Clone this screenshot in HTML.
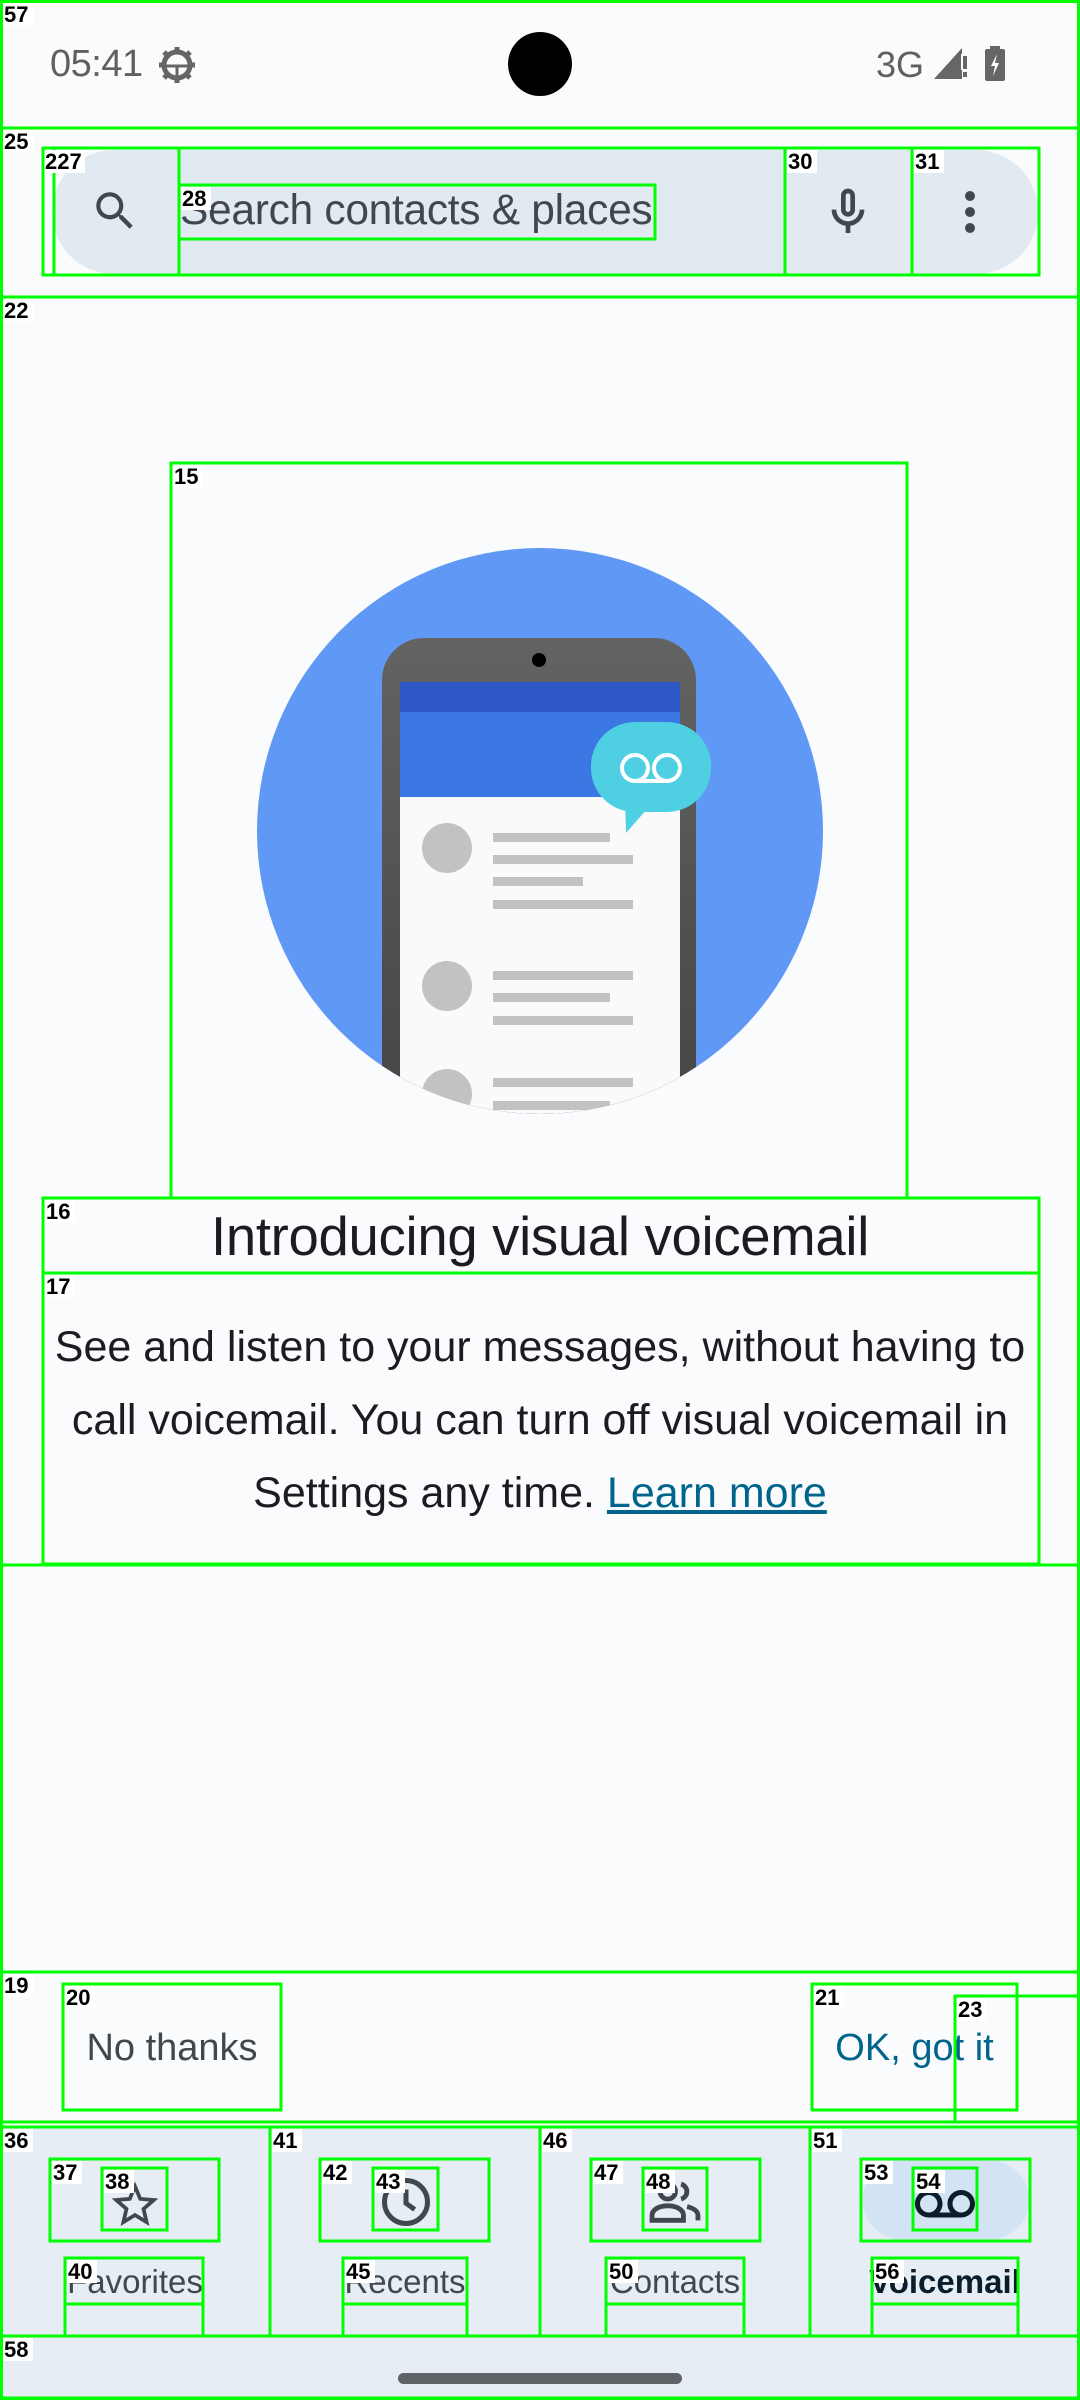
<!DOCTYPE html>
<html><head><meta charset="utf-8">
<style>
*{margin:0;padding:0;box-sizing:border-box}
html,body{width:1080px;height:2400px;overflow:hidden;background:#fafbfd;font-family:"Liberation Sans",sans-serif}
.a{position:absolute}
.t{white-space:nowrap}
</style></head><body>
<!-- status bar -->
<div class="a t" style="left:50px;top:43px;font-size:38px;color:#606060;letter-spacing:-0.5px">05:41</div>
<svg class="a" style="left:156px;top:45px" width="42" height="40" viewBox="0 0 42 40">
<circle cx="21" cy="20" r="13" fill="none" stroke="#666" stroke-width="5"/>
<g stroke="#666" stroke-width="5"><line x1="21" y1="2" x2="21" y2="8"/><line x1="21" y1="32" x2="21" y2="38"/><line x1="3" y1="20" x2="9" y2="20"/><line x1="33" y1="20" x2="39" y2="20"/><line x1="8" y1="7" x2="12" y2="11"/><line x1="30" y1="29" x2="34" y2="33"/><line x1="8" y1="33" x2="12" y2="29"/><line x1="30" y1="11" x2="34" y2="7"/></g>
<line x1="10" y1="21" x2="32" y2="21" stroke="#666" stroke-width="3"/><line x1="21" y1="21" x2="21" y2="32" stroke="#666" stroke-width="3"/>
</svg>
<div class="a" style="left:508px;top:32px;width:64px;height:64px;border-radius:50%;background:#000"></div>
<div class="a t" style="left:876px;top:44px;font-size:36px;color:#606060">3G</div>
<svg class="a" style="left:934px;top:46px" width="36" height="34"><polygon points="0,33 28,2 28,33" fill="#666"/><rect x="27" y="8" width="9" height="16" fill="#fafbfd"/><rect x="29" y="10" width="4" height="13" fill="#666"/><rect x="29" y="26" width="4" height="5" fill="#666"/></svg>
<svg class="a" style="left:984px;top:46px" width="22" height="36"><rect x="6" y="0" width="10" height="4" fill="#666"/><rect x="1" y="3" width="20" height="32" rx="2" fill="#666"/><polygon points="13,8 7,20 11,20 9,30 15,17 11,17" fill="#fff"/></svg>

<!-- search -->
<div class="a" style="left:52px;top:150px;width:986px;height:124px;border-radius:62px;background:#e1eaf1"></div>
<svg class="a" style="left:90px;top:186px" width="50" height="50" viewBox="0 0 24 24"><path d="M15.5 14h-.79l-.28-.27A6.470 6.470 0 0 0 16 9.5 6.5 6.5 0 1 0 9.5 16c1.610 0 3.090-.59 4.230-1.57l.27.28v.79l5 4.990L20.490 19l-4.990-5zm-6 0C7.010 14 5 11.990 5 9.5S7.010 5 9.5 5 14 7.010 14 9.5 11.990 14 9.5 14z" fill="#42474e"/></svg>
<div class="a t" style="left:180px;top:187px;font-size:42.5px;color:#42474e;letter-spacing:-0.3px">Search contacts &amp; places</div>
<svg class="a" style="left:820px;top:184px" width="56" height="56" viewBox="0 0 24 24"><path d="M12 14c1.66 0 3-1.34 3-3V5c0-1.66-1.34-3-3-3S9 3.34 9 5v6c0 1.66 1.34 3 3 3zm-1-9c0-.55.45-1 1-1s1 .45 1 1v6c0 .55-.45 1-1 1s-1-.45-1-1V5zm6 6c0 2.76-2.24 5-5 5s-5-2.24-5-5H5c0 3.53 2.61 6.43 6 6.92V21h2v-3.08c3.39-.49 6-3.39 6-6.92h-2z" fill="#42474e"/></svg>
<svg class="a" style="left:955px;top:188px" width="30" height="50"><circle cx="15" cy="8" r="5" fill="#42474e"/><circle cx="15" cy="24" r="5" fill="#42474e"/><circle cx="15" cy="40" r="5" fill="#42474e"/></svg>

<!-- illustration -->
<svg class="a" style="left:0;top:0" width="1080" height="1200">
<defs><clipPath id="c"><circle cx="540" cy="831" r="283"/></clipPath>
<linearGradient id="g" x1="0" y1="0" x2="0" y2="1"><stop offset="0" stop-color="#636363"/><stop offset="1" stop-color="#444"/></linearGradient></defs>
<circle cx="540" cy="831" r="283" fill="#6098f5"/>
<g clip-path="url(#c)">
<path d="M382 1130 V680 a42 42 0 0 1 42 -42 H654 a42 42 0 0 1 42 42 V1130 Z" fill="url(#g)"/>
<circle cx="539" cy="660" r="7" fill="#000"/>
<rect x="400" y="682" width="280" height="450" fill="#fafafa"/>
<rect x="400" y="682" width="280" height="30" fill="#2c57c5"/>
<rect x="400" y="712" width="280" height="85" fill="#3b78e4"/>
<circle cx="447" cy="848" r="25" fill="#c2c2c2"/>
<rect x="493" y="833" width="117" height="9" fill="#c2c2c2"/><rect x="493" y="855" width="140" height="9" fill="#c2c2c2"/><rect x="493" y="877" width="90" height="9" fill="#c2c2c2"/><rect x="493" y="900" width="140" height="9" fill="#c2c2c2"/>
<circle cx="447" cy="986" r="25" fill="#c2c2c2"/>
<rect x="493" y="971" width="140" height="9" fill="#c2c2c2"/><rect x="493" y="993" width="117" height="9" fill="#c2c2c2"/><rect x="493" y="1016" width="140" height="9" fill="#c2c2c2"/>
<circle cx="447" cy="1094" r="25" fill="#c2c2c2"/>
<rect x="493" y="1078" width="140" height="9" fill="#c2c2c2"/><rect x="493" y="1101" width="117" height="9" fill="#c2c2c2"/>
</g>
<rect x="591" y="722" width="120" height="90" rx="44" fill="#4fd0e2"/>
<polygon points="625,800 655,800 626,833" fill="#4fd0e2"/>
<circle cx="635" cy="768" r="13" fill="none" stroke="#fff" stroke-width="4"/>
<circle cx="667" cy="768" r="13" fill="none" stroke="#fff" stroke-width="4"/>
<line x1="635" y1="781" x2="667" y2="781" stroke="#fff" stroke-width="4"/>
</svg>

<!-- text -->
<div class="a t" style="left:0;width:1080px;top:1205px;text-align:center;font-size:54.5px;color:#1b1c1f;letter-spacing:-0.3px">Introducing visual voicemail</div>
<div class="a t" style="left:0;width:1080px;top:1311px;text-align:center;font-size:43px;line-height:73px;color:#1b1c1f">See and listen to your messages, without having to<br>call voicemail. You can turn off visual voicemail in<br>Settings any time. <span style="color:#00658c;text-decoration:underline">Learn more</span></div>

<!-- buttons -->
<div class="a t" style="left:63px;width:218px;top:2027px;text-align:center;font-size:38px;color:#42474e">No thanks</div>
<div class="a t" style="left:812px;width:205px;top:2027px;text-align:center;font-size:38px;color:#00658c">OK, got it</div>

<!-- nav -->
<div class="a" style="left:0;top:2127px;width:1080px;height:273px;background:#e6edf5"></div>
<div class="a" style="left:863px;top:2160px;width:166px;height:80px;border-radius:40px;background:#d2e4f4"></div>
<svg class="a" style="left:107px;top:2177px" width="56" height="56" viewBox="0 0 24 24"><path d="M22 9.24l-7.19-.62L12 2 9.19 8.63 2 9.24l5.46 4.73L5.82 21 12 17.27 18.18 21l-1.63-7.03L22 9.24zM12 15.4l-3.76 2.27 1-4.28-3.32-2.88 4.38-.38L12 6.1l1.71 4.04 4.38.38-3.32 2.880 1 4.280L12 15.4z" fill="#42474e"/></svg>
<svg class="a" style="left:376px;top:2172px" width="60" height="60" viewBox="0 0 24 24"><circle cx="12" cy="12" r="8.6" fill="none" stroke="#42474e" stroke-width="2"/><path d="M12 7v5.5l3.5 2.5" fill="none" stroke="#42474e" stroke-width="2"/></svg>
<svg class="a" style="left:646px;top:2172px" width="58" height="58" viewBox="0 0 24 24"><circle cx="9" cy="8" r="3.2" fill="none" stroke="#42474e" stroke-width="2"/><path d="M2.5 20v-2c0-2.5 3-4 6.5-4s6.5 1.5 6.5 4v2z" fill="none" stroke="#42474e" stroke-width="2"/><path d="M14.5 5a3.2 3.2 0 0 1 0 6.2M17 14.3c2.4.6 4.5 1.8 4.5 3.7v2" fill="none" stroke="#42474e" stroke-width="2"/></svg>
<svg class="a" style="left:915px;top:2175px" width="60" height="60" viewBox="0 0 24 24"><path d="M18.5 6C15.46 6 13 8.46 13 11.5c0 1.33.47 2.55 1.26 3.5H9.74A5.47 5.47 0 0 0 11 11.5C11 8.46 8.54 6 5.5 6S0 8.46 0 11.5 2.46 17 5.5 17h13c3.04 0 5.5-2.46 5.5-5.5S21.54 6 18.5 6zm-13 9C3.57 15 2 13.43 2 11.5S3.57 8 5.5 8 9 9.57 9 11.5 7.43 15 5.5 15zm13 0c-1.93 0-3.5-1.57-3.5-3.5S16.57 8 18.5 8 22 9.57 22 11.5 20.43 15 18.5 15z" fill="#0b1c2a"/></svg>
<div class="a t" style="left:0;width:270px;top:2263px;text-align:center;font-size:33px;color:#42474e">Favorites</div>
<div class="a t" style="left:270px;width:270px;top:2263px;text-align:center;font-size:33px;color:#42474e">Recents</div>
<div class="a t" style="left:540px;width:270px;top:2263px;text-align:center;font-size:33px;color:#42474e">Contacts</div>
<div class="a t" style="left:810px;width:270px;top:2263px;text-align:center;font-size:33px;font-weight:bold;color:#0b1c2a">Voicemail</div>
<div class="a" style="left:398px;top:2373px;width:284px;height:11px;border-radius:6px;background:#5f6368"></div>

<!-- annotation overlay -->
<svg class="a" style="left:0;top:0" width="1080" height="2400" font-family="Liberation Sans" font-size="22" font-weight="bold">
<g fill="none" stroke="#00ff00" stroke-width="3">
<rect x="1.5" y="1.5" width="1077" height="2397"/>
<rect x="1.5" y="128" width="1077" height="169"/>
<rect x="43" y="148" width="996" height="127"/>
<rect x="54" y="148" width="125" height="127"/>
<rect x="179" y="185" width="476" height="54"/>
<rect x="785" y="148" width="127" height="127"/>
<rect x="912" y="148" width="127" height="127"/>
<rect x="1.5" y="297" width="1077" height="1268"/>
<rect x="171" y="463" width="736" height="735"/>
<rect x="43" y="1198" width="996" height="75"/>
<rect x="43" y="1273" width="996" height="291"/>
<rect x="1.5" y="1972" width="1077" height="150"/>
<rect x="63" y="1984" width="218" height="126"/>
<rect x="812" y="1984" width="205" height="126"/>
<rect x="955" y="1996" width="130" height="126"/>
<rect x="1.5" y="2127" width="268.5" height="209"/>
<rect x="270" y="2127" width="270" height="209"/>
<rect x="540" y="2127" width="270" height="209"/>
<rect x="810" y="2127" width="268.5" height="209"/>
<rect x="50" y="2159" width="169" height="82"/><rect x="102" y="2168" width="65" height="62"/>
<rect x="320" y="2159" width="169" height="82"/><rect x="373" y="2168" width="65" height="62"/>
<rect x="591" y="2159" width="169" height="82"/><rect x="643" y="2168" width="64" height="62"/>
<rect x="861" y="2159" width="169" height="82"/><rect x="913" y="2168" width="64" height="62"/>
<rect x="65" y="2258" width="138" height="46"/><rect x="65" y="2304" width="138" height="32"/>
<rect x="343" y="2258" width="124" height="46"/><rect x="343" y="2304" width="124" height="32"/>
<rect x="606" y="2258" width="138" height="46"/><rect x="606" y="2304" width="138" height="32"/>
<rect x="872" y="2258" width="146" height="46"/><rect x="872" y="2304" width="146" height="32"/>
<rect x="1.5" y="2336" width="1077" height="62"/>
</g>
<g fill="#fff">
<rect x="3" y="3" width="30" height="23"/><rect x="3" y="130" width="30" height="23"/><rect x="45" y="150" width="40" height="23"/><rect x="181" y="187" width="30" height="23"/><rect x="787" y="150" width="30" height="23"/><rect x="914" y="150" width="30" height="23"/><rect x="3" y="299" width="30" height="23"/><rect x="173" y="465" width="30" height="23"/><rect x="45" y="1200" width="30" height="23"/><rect x="45" y="1275" width="30" height="23"/><rect x="3" y="1974" width="30" height="23"/><rect x="65" y="1986" width="30" height="23"/><rect x="814" y="1986" width="30" height="23"/><rect x="957" y="1998" width="30" height="23"/><rect x="3" y="2129" width="30" height="23"/><rect x="272" y="2129" width="30" height="23"/><rect x="542" y="2129" width="30" height="23"/><rect x="812" y="2129" width="30" height="23"/><rect x="52" y="2161" width="30" height="23"/><rect x="104" y="2170" width="30" height="23"/><rect x="322" y="2161" width="30" height="23"/><rect x="375" y="2170" width="30" height="23"/><rect x="593" y="2161" width="30" height="23"/><rect x="645" y="2170" width="30" height="23"/><rect x="863" y="2161" width="30" height="23"/><rect x="915" y="2170" width="30" height="23"/><rect x="67" y="2260" width="30" height="23"/><rect x="345" y="2260" width="30" height="23"/><rect x="608" y="2260" width="30" height="23"/><rect x="874" y="2260" width="30" height="23"/><rect x="3" y="2338" width="30" height="23"/>
</g>
<g fill="#000">
<text x="4" y="22">57</text><text x="4" y="149">25</text><text x="45" y="169">227</text><text x="182" y="206">28</text><text x="788" y="169">30</text><text x="915" y="169">31</text><text x="4" y="318">22</text><text x="174" y="484">15</text><text x="46" y="1219">16</text><text x="46" y="1294">17</text><text x="4" y="1993">19</text><text x="66" y="2005">20</text><text x="815" y="2005">21</text><text x="958" y="2017">23</text><text x="4" y="2148">36</text><text x="273" y="2148">41</text><text x="543" y="2148">46</text><text x="813" y="2148">51</text><text x="53" y="2180">37</text><text x="105" y="2189">38</text><text x="323" y="2180">42</text><text x="376" y="2189">43</text><text x="594" y="2180">47</text><text x="646" y="2189">48</text><text x="864" y="2180">53</text><text x="916" y="2189">54</text><text x="68" y="2279">40</text><text x="346" y="2279">45</text><text x="609" y="2279">50</text><text x="875" y="2279">56</text><text x="4" y="2357">58</text>
</g>
</svg>
</body></html>
